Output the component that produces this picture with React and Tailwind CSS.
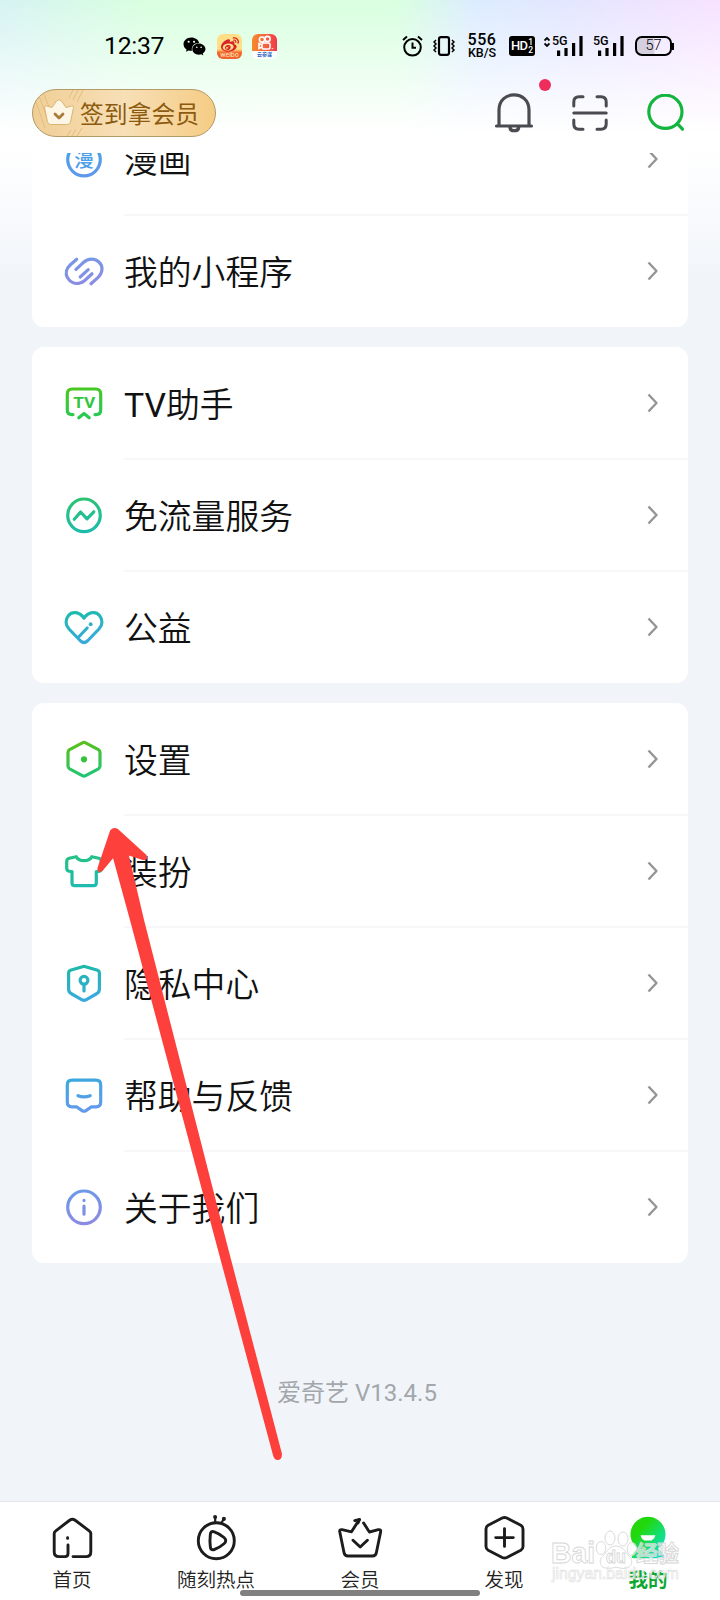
import React from 'react'
import { FaWeixin, FaWeibo } from 'react-icons/fa'

const Icon = ({ id, from, to, children }) => (
  <svg className="w-12 h-12 shrink-0" viewBox="0 0 48 48" fill="none" stroke={`url(#${id})`} strokeWidth="3.2" strokeLinecap="round" strokeLinejoin="round">
    <defs>
      <linearGradient id={id} gradientUnits="userSpaceOnUse" x1="20" y1="7" x2="26" y2="41">
        <stop offset="0" stopColor={from} />
        <stop offset="1" stopColor={to} />
      </linearGradient>
    </defs>
    {children}
  </svg>
)

const icons = {
  comic: (
    <Icon id="comic" from="#3fa6e2" to="#6097ee">
      <circle cx="24" cy="24.6" r="16.3" />
      <text x="24" y="31.5" textAnchor="middle" fontSize="19.5" fontWeight="500" fill="#4d9fe8" stroke="none">漫</text>
    </Icon>
  ),
  mini: (
    <Icon id="mini" from="#7399e6" to="#8d8be2">
      <path d="M16.7 12.2 L10.4 17.8 C6.5 21.4 5 26.5 7.4 30.6 C10 35.4 15 37.4 20 36 C22 35.4 23.6 34.4 25 33.2 L32 26.8" />
      <path d="M16 22.4 L23 15.8 C25.5 13.6 28 12.2 31.5 12.2 C37 12.2 42 16.4 42 21.6 C42 25.4 40.4 28.4 37.6 30.9 L31 36.8" />
      <path d="M20.2 30 L28.2 22.6" />
    </Icon>
  ),
  tv: (
    <Icon id="tv" from="#4cc81e" to="#25c95a">
      <path d="M13 35.6 H12 Q7.3 35.6 7.3 31 V15 Q7.3 10 12.3 10 H35.7 Q40.7 10 40.7 15 V31 Q40.7 35.6 36 35.6 H35" />
      <path d="M18.8 38.8 L24 34.6 L29.2 38.8" />
      <text x="24.2" y="29.3" textAnchor="middle" fontSize="14.5" fontWeight="700" textLength="22" lengthAdjust="spacingAndGlyphs" fill="#31c63d" stroke="none">TV</text>
    </Icon>
  ),
  flow: (
    <Icon id="flow" from="#2dc374" to="#1cbbab">
      <circle cx="24" cy="24.3" r="16.3" />
      <path d="M14.3 28.2 L20.6 21 L27 27.8 L33.8 20.8" />
    </Icon>
  ),
  heart: (
    <Icon id="heart" from="#1dbbac" to="#3aa8de">
      <path d="M24 15.2 C19.5 8.3 12 8.3 8.5 12.5 C5 16.8 5.4 22 9 26 L20.6 38 Q24 41 27.4 38 L39 26 C42.6 22 43 16.8 39.5 12.5 C36 8.3 28.5 8.3 24 15.2 Z" />
      <path d="M18.6 34 L27.2 25" />
      <path d="M30.7 21.2 V21.3" strokeWidth="3.8" />
    </Icon>
  ),
  setting: (
    <Icon id="setting" from="#5ac01a" to="#1fc575">
      <path d="M22.4 7.9 Q24 7 25.6 7.9 L38.4 14.7 Q40 15.7 40 17.5 V31 Q40 32.8 38.4 33.8 L25.6 40.6 Q24 41.5 22.4 40.6 L9.6 33.8 Q8 32.8 8 31 V17.5 Q8 15.7 9.6 14.7 Z" />
      <circle cx="24" cy="24.3" r="3.1" fill="#36c23f" stroke="none" />
    </Icon>
  ),
  shirt: (
    <Icon id="shirt" from="#24c282" to="#1dbab5">
      <path d="M16.2 9.7 C19 15 29 15 31.8 9.7 L38.8 11.3 Q41.3 12 41.3 14.5 V21.5 Q41 24.8 36.3 24.6 V36 Q36.3 38.6 33.7 38.6 H14.6 Q12 38.6 12 36 V24.6 Q6.9 24.8 6.7 21.5 V14.5 Q6.7 12 9.2 11.3 Z" />
    </Icon>
  ),
  shield: (
    <Icon id="shield" from="#1cb9aa" to="#3aaade">
      <path d="M22.5 7.7 Q24 7.1 25.5 7.7 L37.6 11.2 Q39.4 11.9 39.4 13.7 V30 Q39.4 33 37 34.5 L26 40.8 Q24 41.8 22 40.8 L11 34.5 Q8.6 33 8.6 30 V13.7 Q8.6 11.9 10.4 11.2 Z" />
      <circle cx="24" cy="21.3" r="3.9" />
      <path d="M24 25.5 V32" />
    </Icon>
  ),
  help: (
    <Icon id="help" from="#3ba9dd" to="#6499ee">
      <path d="M12 9.2 H36 Q40.7 9.2 40.7 14 V31 Q40.7 35.8 36 35.8 H31.5 L26 39.6 Q24 40.8 22 39.6 L16.5 35.8 H12 Q7.3 35.8 7.3 31 V14 Q7.3 9.2 12 9.2 Z" />
      <path d="M18 24.7 Q24 27.2 30.2 24.7" />
    </Icon>
  ),
  about: (
    <Icon id="about" from="#6c99e8" to="#8c8ae2">
      <circle cx="24" cy="24.3" r="16.3" />
      <path d="M24 23.2 V31.2 M24 17.4 V17.5" strokeWidth="3.2" />
    </Icon>
  ),
}

const groups = [
  [['comic', '漫画'], ['mini', '我的小程序']],
  [['tv', <><span className="font-normal">TV</span>助手</>], ['flow', '免流量服务'], ['heart', '公益']],
  [['setting', '设置'], ['shirt', '装扮'], ['shield', '隐私中心'], ['help', '帮助与反馈'], ['about', '关于我们']],
]

const Row = ({ icon, label, last }) => (
  <div className="flex items-center h-28 pl-7">
    {icons[icon]}
    <div className={`flex items-center justify-between flex-1 h-28 mt-0.5 ml-4 pr-[29px] border-b-2 ${last ? 'border-transparent' : 'border-[#f6f7f9]'}`}>
      <span className="text-[33.8px] leading-none pt-1.5 font-[350] text-[#111]">{label}</span>
      <svg className="w-3 h-5" viewBox="0 0 12 20" fill="none" stroke="#959595" strokeWidth="2.4" strokeLinejoin="round">
        <path d="M1.5 1.5 L9.5 10 L1.5 18.5" />
      </svg>
    </div>
  </div>
)

const Signal = () => (
  <svg className="w-[27px] h-5" viewBox="0 0 27 20">
    <path d="M2.6 14.5 V20 M10 12 V20 M17.6 7 V20 M25 0 V20" stroke="#000" strokeWidth="3.2" />
  </svg>
)

const StatusBar = () => (
  <div className="flex items-center h-[89px] pt-[3px] pl-[104px] pr-[46px] text-black">
    <span className="w-[79px] text-[24.8px] leading-none tracking-[-0.3px] font-[Roboto]">12:37</span>
    <FaWeixin className="w-[23px] h-[21px]" />
    <div className="relative flex justify-center w-[25px] h-[25px] ml-[11px] rounded-md bg-gradient-to-b from-[#ffdf85] from-60% to-[#f0642c] to-75% overflow-hidden">
      <FaWeibo className="w-[18px] h-[18px] mt-0.5 text-[#d8232a]" />
      <span className="absolute bottom-0 text-[7px] leading-[7px] text-[#ffe9c0]">weibo</span>
    </div>
    <div className="relative w-[25px] h-[25px] ml-2.5 rounded-md bg-white overflow-hidden">
      <svg className="w-[25px] h-[17px] bg-gradient-to-r from-[#f58a2b] to-[#f0384c]" viewBox="0 0 25 17" fill="none" stroke="#fff" strokeWidth="1.6">
        <circle cx="10" cy="5.6" r="2.6" />
        <circle cx="15.5" cy="5" r="2.6" />
        <rect x="10" y="9" width="8" height="6" rx="1.5" />
        <path d="M10 11 L7 9.5 V14.5 L10 13 M20.5 14 V14.8" />
      </svg>
      <span className="absolute inset-x-0 bottom-0.5 text-center text-[5px] leading-[5px] font-bold text-[#3167c4]">云参谋</span>
    </div>

    <svg className="w-[21px] h-[22px] ml-auto" viewBox="0 0 21 22" fill="none" stroke="#000" strokeWidth="2">
      <circle cx="10.5" cy="12.3" r="8.3" />
      <path d="M10.5 7.5 V12.8 H14 M1 5 L5 1.5 M20 5 L16 1.5" />
    </svg>
    <svg className="w-[22px] h-5 ml-2.5" viewBox="0 0 22 20" fill="none" stroke="#000">
      <rect x="6" y="1.2" width="10" height="17.6" rx="2" strokeWidth="2.2" />
      <path d="M3 4 L1 6 L3 8 L1 10 L3 12 L1 14 L3 16 M19 4 L21 6 L19 8 L21 10 L19 12 L21 14 L19 16" strokeWidth="1.5" />
    </svg>
    <div className="flex flex-col items-center w-[30px] ml-3 font-[Roboto] font-medium">
      <span className="text-[16px] leading-[13px] tracking-[0.6px]">556</span>
      <span className="text-[12.5px] leading-[13px]">KB/S</span>
    </div>
    <div className="relative w-[26px] h-5 ml-3 rounded-[3px] bg-black text-white font-[Roboto] font-medium">
      <span className="absolute left-0.5 top-0.5 text-[13px] leading-4 tracking-tighter">HD</span>
      <span className="absolute right-0.5 top-0.5 text-[8.5px] leading-2">1<br />2</span>
    </div>
    <div className="relative ml-[21px]">
      <svg className="absolute -left-3 top-px w-1.5 h-2.5" viewBox="0 0 6 10" fill="none" stroke="#000" strokeWidth="1.8">
        <path d="M0.5 3.5 L3 1 L5.5 3.5 M0.5 6.5 L3 9 L5.5 6.5" />
      </svg>
      <span className="absolute -left-[4px] -top-px text-[12.5px] leading-3 font-medium font-[Roboto]">5G</span>
      <Signal />
    </div>
    <div className="relative ml-[14px]">
      <span className="absolute -left-[4px] -top-px text-[12.5px] leading-3 font-medium font-[Roboto]">5G</span>
      <Signal />
    </div>
    <div className="flex items-center ml-[11px]">
      <div className="flex items-center justify-center w-[37px] h-5 border-2 border-black rounded-[7px] bg-gradient-to-r from-[#d5cfe0] from-50% to-transparent to-55% text-[14.5px] leading-none font-[Roboto] font-light">57</div>
      <div className="w-0.5 h-[7px] bg-black" />
    </div>
  </div>
)

const TopBar = () => (
  <div className="flex items-center h-12 pl-8 pr-[35px]">
    <div className="relative flex items-center w-[184px] h-12 pl-2.5 border border-[#b49a66] rounded-full bg-gradient-to-r from-[#f0cf96] via-[#f7dfb6] to-[#f5cc84] overflow-hidden">
      <svg className="absolute left-0 top-0 w-20 h-12" viewBox="0 0 80 48" fill="none" stroke="#e3bd7e" strokeWidth="1">
        <path d="M6 6 L14 28 M10 2 L18 22 M3 12 L12 38 M36 8 L40 0 M40 10 L45 0 M44 12 L50 0 M34 46 L38 40 M39 46 L43 39 M44 46 L49 38" />
      </svg>
      <svg className="relative w-8 h-8" viewBox="0 0 32 32" fill="none" strokeLinejoin="round" strokeLinecap="round">
        <path d="M1.5 10.5 Q1 8.5 3.5 9 L9 10.5 L13.5 4 Q16 1.5 18.5 4 L23 10.5 L28.5 9 Q31 8.5 30.5 10.5 L27.5 25 Q27 27.5 24.4 27.5 H7.6 Q5 27.5 4.5 25 Z" fill="#fdf6e6" stroke="#dab472" strokeWidth="1" />
        <path d="M12 17 L16 21 L20 17" stroke="#a97a38" strokeWidth="2.8" />
      </svg>
      <span className="pt-[5px] ml-[5px] text-[23.8px] leading-none text-[#8c5b10] whitespace-nowrap">签到拿会员</span>
    </div>
    <div className="relative w-10 h-10 ml-auto">
      <svg className="w-10 h-10" viewBox="0 0 40 40" fill="none" stroke="#4a4b50" strokeWidth="3.2" strokeLinecap="round">
        <path d="M5 33 V17 C5 -3.2 35 -3.2 35 17 V33 M2.5 33 H37.5 M15.8 34 C16.2 39 24.4 39 24.8 34" />
      </svg>
      <span className="absolute -top-[14px] left-[45px] w-3 h-3 rounded-full bg-[#ee2d5c]" />
    </div>
    <svg className="w-9 h-9 ml-[38px]" viewBox="0 0 36 36" fill="none" stroke="#4a4b50" strokeWidth="3" strokeLinecap="round">
      <path d="M1.8 11 V7 Q1.8 1.8 7 1.8 H11 M25 1.8 H29 Q34.2 1.8 34.2 7 V11 M34.2 25 V29 Q34.2 34.2 29 34.2 H25 M11 34.2 H7 Q1.8 34.2 1.8 29 V25 M1.8 18 H34.2" />
    </svg>
    <svg className="w-[38px] h-[38px] ml-[39px]" viewBox="0 0 38 38" fill="none" stroke="#14b53e" strokeWidth="3.2" strokeLinecap="round">
      <circle cx="18.4" cy="17.8" r="16.6" />
      <path d="M30.5 29.8 L35.5 35.2" />
    </svg>
  </div>
)

const tabs = [
  {
    label: '首页',
    icon: (
      <>
        <path d="M20 31 V39.5 Q20 42.6 17 42.6 H11 Q6.2 42.6 6.2 38 V19.5 Q6.2 18 7.8 16.8 L22 6 Q24.4 4.3 26.8 6 L41.2 16.8 Q42.8 18 42.8 19.5 V38 Q42.8 42.6 38 42.6 H25" />
        <path d="M19.6 23.8 V24.4" />
      </>
    ),
  },
  {
    label: '随刻热点',
    icon: (
      <>
        <circle cx="24.3" cy="26.7" r="18" />
        <path d="M18.3 21 Q18.3 16.6 22.3 17.8 Q27.5 19.6 32 23.5 Q35.4 26.7 32 29.8 Q27.5 33.8 22.3 35.5 Q18.3 36.6 18.3 32.3 Q17.6 26.7 18.3 21 Z" />
        <path d="M23.2 3 V8 M31.7 4.8 L29.8 8.4" strokeWidth="2.2" />
        <path d="M23.1 2.9 V3 M31.9 4.8 V4.9" strokeWidth="4" />
      </>
    ),
  },
  {
    label: '会员',
    icon: (
      <>
        <path d="M23 6 L15.5 17.8 L6 15.6 Q3.2 15.4 3.8 18 L8 38.5 Q8.6 42 12 42 H36.4 Q39.8 42 40.4 38.5 L44.6 18 Q45.2 15.4 42.4 15.6 L33.4 18 L27.6 9" />
        <path d="M18.8 6.6 L23.6 5.4 L22 9 M17 26.2 L24.2 33 L31.4 26.2" />
      </>
    ),
  },
  {
    label: '发现',
    icon: (
      <>
        <path d="M22.2 4 Q24.5 2.9 26.8 4 L40.8 11.2 Q43 12.5 43 15 V32.5 Q43 35 40.8 36.3 L26.8 43.5 Q24.5 44.6 22.2 43.5 L8.2 36.3 Q6 35 6 32.5 V15 Q6 12.5 8.2 11.2 Z" />
        <path d="M24.5 14.8 V32.4 M15.7 23.6 H33.3" />
      </>
    ),
  },
  {
    label: '我的',
    active: true,
    icon: (
      <g stroke="none">
        <defs>
          <linearGradient id="me" x1="0" y1="0" x2="1" y2="1">
            <stop offset="0.3" stopColor="#22d80c" />
            <stop offset="0.65" stopColor="#12df7c" />
            <stop offset="1" stopColor="#10dbe8" />
          </linearGradient>
        </defs>
        <path d="M24 2.8 A17.5 17.5 0 0 1 33.8 34.8 Q37.5 36.5 40 41 Q41 44.3 38 44.3 H10 Q7 44.3 8 41 Q10.5 36.5 14.2 34.8 A17.5 17.5 0 0 1 24 2.8 Z" fill="url(#me)" />
        <path d="M16.6 21.2 H31.4 Q31 24.5 27.5 26.5 H20.5 Q17 24.5 16.6 21.2 Z" fill="#fff" />
      </g>
    ),
  },
]

const TabBar = () => (
  <div className="relative flex h-[99px] shrink-0 border-t border-[#e3e6eb] bg-white">
    {tabs.map(({ label, icon, active }) => (
      <div key={label} className={`flex flex-col items-center flex-1 pt-3 ${active ? 'text-[#0ba82f] font-bold' : 'text-[#222] font-[350]'}`}>
        <svg className="w-12 h-12" viewBox="0 0 48 48" fill="none" stroke="#1c1c1c" strokeWidth="2.9" strokeLinecap="round" strokeLinejoin="round">
          {icon}
        </svg>
        <span className="mt-[9px] text-[19.5px] leading-none">{label}</span>
      </div>
    ))}
    <div className="absolute left-60 bottom-[4px] w-60 h-1.5 rounded-full bg-[#808080]" />
    <Watermark />
  </div>
)

const Watermark = () => (
  <svg className="absolute left-[548px] top-[18px] w-[136px] h-[70px]" viewBox="0 0 136 70" fill="#fff" fillOpacity="0.6" stroke="#d6d6d6" strokeWidth="0.9" fontFamily="Liberation Sans">
    <text x="3" y="43" fontSize="30" fontWeight="700" textLength="44" lengthAdjust="spacingAndGlyphs">Bai</text>
    <ellipse cx="53" cy="28" rx="4.8" ry="6.5" />
    <ellipse cx="62" cy="18" rx="5" ry="7" />
    <ellipse cx="75" cy="19" rx="5" ry="7" />
    <ellipse cx="84" cy="29" rx="4.8" ry="6.5" />
    <path d="M68 26 C76 26 78 34 83 38 C86 46 80 51 68 47 C56 51 50 46 53 38 C58 34 60 26 68 26 Z" />
    <text x="58" y="43" fontSize="18" fontWeight="700" textLength="20" lengthAdjust="spacingAndGlyphs">du</text>
    <text x="88" y="41" fontSize="22" fontWeight="700" fontFamily="Noto Sans CJK SC" textLength="43">经验</text>
    <text x="4" y="59" fontSize="17" textLength="127" lengthAdjust="spacingAndGlyphs" stroke="#e2e2e2" strokeWidth="0.7">jingyan.baidu.com</text>
  </svg>
)

const App = () => {
  return (
    <div className="relative flex flex-col w-[720px] h-[1600px] overflow-hidden bg-[#f1f5fa] font-[Roboto,'Noto_Sans_CJK_SC',sans-serif]">
      <div className="absolute inset-x-0 top-0 h-[280px] bg-[linear-gradient(to_bottom,transparent,#fff_48%,#fff_52%,#f1f5fa),linear-gradient(to_right,#d6f3f3,#d8ffdf_20%,#d8ffdf_55%,#dcecff_66%,#e4e6ff_80%,#f7e2ff)]" />
      <div className="relative h-[153px] shrink-0">
        <StatusBar />
        <TopBar />
      </div>
      <div className="relative flex-1 overflow-hidden px-8">
        <div className="flex flex-col gap-5 -mt-[50px]">
          {groups.map((rows, i) => (
            <div key={i} className="rounded-xl bg-white overflow-hidden">
              {rows.map(([icon, label], j) => (
                <Row key={icon} icon={icon} label={label} last={j === rows.length - 1} />
              ))}
            </div>
          ))}
        </div>
        <p className="mt-[116px] pr-1.5 text-center text-[24px] leading-7 text-[#a3a6ab]">爱奇艺 V13.4.5</p>
      </div>
      <TabBar />
      <svg className="absolute left-[90px] top-[820px] w-[200px] h-[650px]" viewBox="90 820 200 650" fill="#fd403c" stroke="#fd403c" strokeWidth="2" strokeLinejoin="round">
        <path d="M111 831 Q114 827.5 117.5 830 L145.5 855.5 Q148 859.5 143 859 L127.5 854 L143 920 L227.5 1250 L281 1454 Q281 1459 277.5 1459 Q275 1459 274 1455 L219 1250 L131 920 L113.5 856 L101.5 870.5 Q98 872.5 98.5 868 Z" />
      </svg>
    </div>
  )
}

export default App
